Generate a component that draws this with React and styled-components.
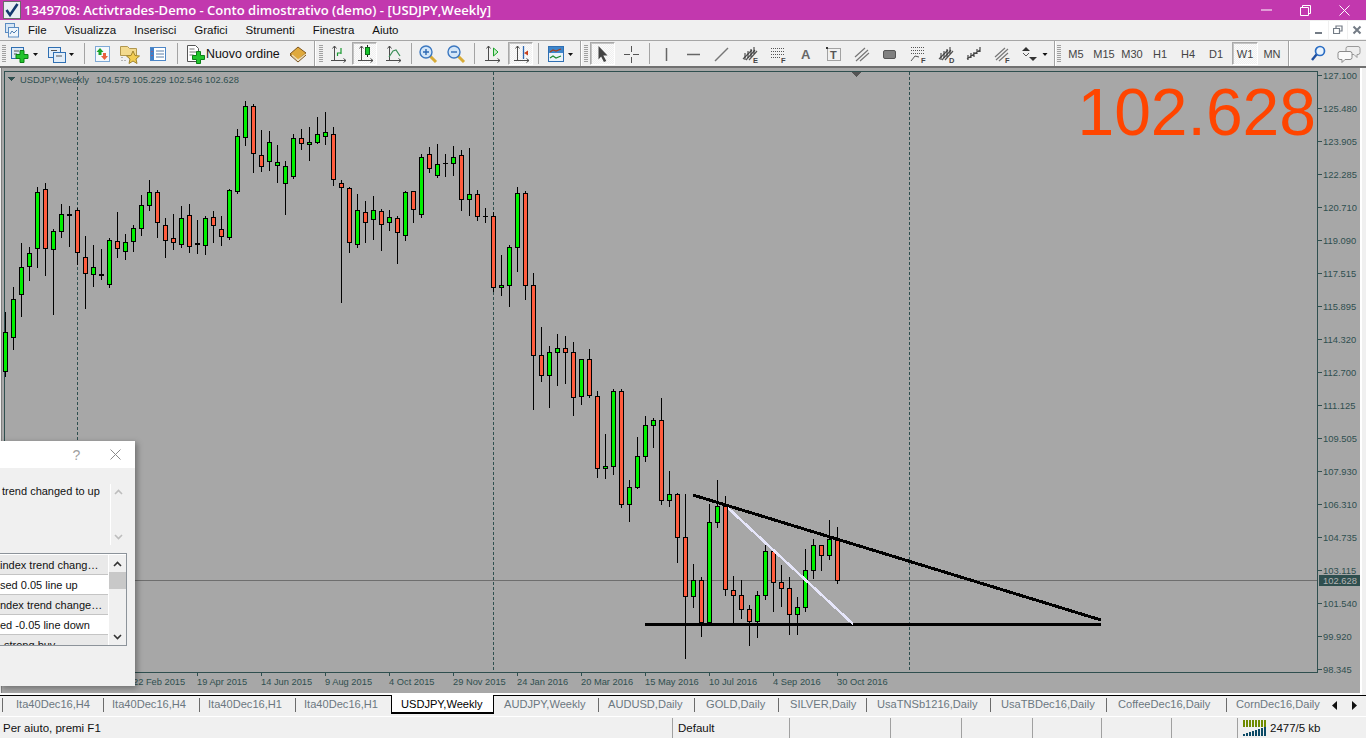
import React from 'react';
import styled, { createGlobalStyle } from 'styled-components';

const GlobalStyle = createGlobalStyle`
  html, body { margin: 0; padding: 0; background: #f0f0f0; overflow: hidden; }
  * { box-sizing: border-box; }
`;

const UI_FONT = '"Liberation Sans", Arial, sans-serif';
const AXIS = '#2f4f4f';

const Page = styled.div`
  width: 1366px;
  height: 738px;
  display: flex;
  flex-direction: column;
  background: #f0f0f0;
  font-family: ${UI_FONT};
  overflow: hidden;
`;

const TitleBar = styled.div`
  height: 20px;
  display: flex;
  align-items: center;
  background: #c238ae;
  color: #fff;
  padding-right: 2px;
`;
const AppIcon = styled.svg`
  margin-left: 3px;
  margin-right: 3px;
  flex: none;
`;
const TitleText = styled.div`
  flex: 1;
  font-family: "Open Sans", sans-serif;
  font-weight: 600;
  font-size: 13.05px;
  white-space: nowrap;
`;
const WinBtn = styled.div`
  width: 39px;
  height: 20px;
  display: flex;
  align-items: center;
  justify-content: center;
`;

const MenuBar = styled.div`
  height: 20px;
  display: flex;
  align-items: center;
  font-size: 11.5px;
  color: #111;
  padding-left: 5px;
`;
const MenuIcon = styled.svg`
  margin-right: 9px;
  flex: none;
`;
const MenuItem = styled.span`
  margin-right: 18px;
`;
const MdiButtons = styled.div`
  margin-left: auto;
  display: flex;
  gap: 1px;
`;
const MdiBtn = styled.div`
  width: 18px;
  height: 18px;
  background: #fff;
  display: flex;
  align-items: center;
  justify-content: center;
`;

const Toolbar = styled.div`
  height: 28px;
  display: flex;
  align-items: center;
  border-top: 1px solid #a6a6a6;
  border-bottom: 2px solid #707070;
`;
const Tool = styled.div`
  width: ${p => p.$w || 28}px;
  height: 23px;
  flex: none;
  margin-left: ${p => p.$ml || 0}px;
  display: flex;
  align-items: center;
  justify-content: ${p => p.$start ? 'flex-start' : 'center'};
  font-size: 11px;
  color: #444;
  ${p => p.$on && `
    border: 1px solid;
    border-color: #a9a9a9 #fff #fff #a9a9a9;
    box-shadow: inset 1px 1px 0 #c4c4c4;
    background: repeating-conic-gradient(#f0f0f0 0 25%, #fbfbfb 0 50%) 0 0 / 2px 2px;
  `}
`;
const Sep = styled.div`
  width: ${p => p.$w}px;
  flex: none;
  display: flex;
  justify-content: center;
  &::before {
    content: '';
    width: 1px;
    height: ${p => (p.$group ? 25 : 21)}px;
    background: #a3a3a3;
    ${p => p.$group && 'box-shadow: 1px 0 0 #fff;'}
  }
`;
const Grip = styled.div`
  width: ${p => p.$w}px;
  flex: none;
  display: flex;
  justify-content: center;
  &::before {
    content: '';
    width: 4px;
    height: 17px;
    background: repeating-linear-gradient(#a0a0a0 0 1px, transparent 1px 2px);
  }
`;
const OrderLabel = styled.span`
  font-size: 12.4px;
  color: #111;
  white-space: nowrap;
`;

const ChartArea = styled.div`
  flex: 1;
  position: relative;
  display: flex;
`;
const ChartPane = styled.div`
  width: 1362px;
  border-right: 2px solid #fff;
  border-bottom: 2px solid #fff;
  background: #a7a7a7;
`;
const ChartSvg = styled.svg`
  display: block;
`;

const Dialog = styled.div`
  position: absolute;
  left: 0;
  top: 373px;
  width: 135px;
  height: 245px;
  background: #f0f0f0;
  box-shadow: 2px 2px 6px rgba(0, 0, 0, 0.35);
  font-size: 11px;
  color: #111;
`;
const DialogHead = styled.div`
  height: 27px;
  background: #fff;
  display: flex;
  justify-content: flex-end;
  align-items: center;
`;
const HeadBtn = styled.div`
  width: 39px;
  display: flex;
  justify-content: center;
  color: #a0a0a0;
  font-size: 14px;
`;
const MessageBox = styled.div`
  margin-top: 16px;
  width: 126px;
  height: 61px;
  display: flex;
`;
const MessageText = styled.div`
  flex: 1;
  padding-left: 2px;
  line-height: 14px;
  white-space: nowrap;
`;
const MessageScroll = styled.div`
  width: 16px;
  border-left: 1px solid #fff;
  display: flex;
  flex-direction: column;
  justify-content: space-between;
  align-items: center;
  padding: 5px 0;
`;
const AlertList = styled.div`
  margin-top: 8px;
  width: 127px;
  height: 93px;
  background: #fff;
  border: 1px solid #8c939a;
  border-left: none;
  display: flex;
  padding-top: 1px;
`;
const AlertRows = styled.div`
  width: 108px;
  overflow: hidden;
`;
const AlertRow = styled.div`
  height: 20px;
  line-height: 21px;
  background: ${p => (p.$alt ? '#e9e9e9' : '#fff')};
  border-bottom: 1px solid #c4c4c4;
  padding-left: ${p => p.$pad || 0}px;
  white-space: nowrap;
  overflow: hidden;
`;
const ListScroll = styled.div`
  flex: 1;
  margin-left: 1px;
  background: #f0f0f0;
  display: flex;
  flex-direction: column;
  align-items: center;
`;
const ScrollArrow = styled.div`
  height: 17px;
  display: flex;
  align-items: center;
`;
const ScrollThumb = styled.div`
  width: 100%;
  height: 17px;
  background: #c8c8c8;
  margin-bottom: auto;
`;

const TabBar = styled.div`
  height: 21px;
  display: flex;
  border-top: 1px solid #000;
  padding-left: 2px;
  background: #f0f0f0;
  position: relative;
  font-size: 11.1px;
  color: #6b7780;
`;
const Tab = styled.div`
  width: ${p => p.$w}px;
  flex: none;
  height: 18px;
  padding-left: ${p => p.$pad}px;
  line-height: 17px;
  white-space: nowrap;
  overflow: hidden;
  position: relative;
  &::before {
    content: '';
    position: absolute;
    left: 0;
    top: 2px;
    width: 1px;
    height: 14px;
    background: ${p => (p.$plain ? 'transparent' : '#6b6b6b')};
  }
  ${p => p.$active && `
    background: #fff;
    color: #000;
    margin-top: -1px;
    height: 19px;
    line-height: 19px;
    border-left: 1px solid #000;
    border-right: 1px solid #000;
    border-bottom: 2px solid #000;
  `}
`;
const TabArrows = styled.div`
  position: absolute;
  left: 1332px;
  top: 5px;
  width: 25px;
  display: flex;
  justify-content: space-between;
`;

const StatusBar = styled.div`
  height: 22px;
  display: flex;
  border-top: 1px solid #fff;
  align-items: center;
  font-size: 11.5px;
  color: #111;
`;
const StatusCell = styled.div`
  width: ${p => p.$w}px;
  flex: none;
  height: 20px;
  line-height: 20px;
  display: flex;
  align-items: center;
  padding-left: ${p => p.$pad || 0}px;
  ${p => p.$line && 'border-left: 1px solid #a0a0a0;'}
  white-space: nowrap;
`;
const NetLabel = styled.span`
  margin-left: 3px;
`;

const I = ({ w = 20, children }) => (
  <svg width={w} height="20" viewBox={`0 0 ${w} 20`} fill="none">{children}</svg>
);

const Drop = ({ x }) => <polygon points={`${x},9 ${x + 5},9 ${x + 2.5},12`} fill="#111" />;
const GreenPlus = ({ x, y }) => (
  <path d={`M${x + 4} ${y}h4v4h4v4h-4v4h-4v-4h-4v-4h4z`} fill="#22c42c" stroke="#0b8016" />
);
const Axes = () => (
  <path d="M6.5 2v15M3 16.5h15M6.5 2l-2 2.5M6.5 2l2 2.5M18 16.5l-2.5-2M18 16.5l-2.5 2" stroke="#4c4c4c" />
);
const Hatch = ({ letter }) => (
  <>
    <path d="M3 15l9-9M6 16l9-10M9 16l8-9" stroke="#555" strokeWidth="1.2" />
    <path d="M5 16V9M8 14V7M11 13V5M14 10V3" stroke="#333" />
    {letter && <text x="13" y="19" fontSize="7.5" fontWeight="700" fill="#444" fontFamily={UI_FONT}>{letter}</text>}
  </>
);

const candles = [
  [312, 332, 371, 376, 'g'], [287, 299, 337, 349, 'g'], [243, 267, 294, 316, 'g'], [247, 253, 266, 280, 'g'],
  [187, 192, 248, 267, 'g'], [183, 189, 248, 275, 'r'], [229, 231, 249, 314, 'g'], [204, 214, 231, 237, 'g'],
  [206, 214, 215, 246, 'd'], [208, 210, 252, 264, 'r'], [236, 257, 273, 308, 'r'], [245, 267, 274, 286, 'g'],
  [249, 274, 275, 279, 'd'], [238, 240, 284, 287, 'g'], [212, 241, 248, 257, 'r'], [234, 242, 251, 259, 'g'],
  [225, 228, 241, 251, 'g'], [195, 205, 228, 235, 'g'], [180, 192, 205, 210, 'g'], [190, 192, 222, 237, 'r'],
  [218, 225, 240, 257, 'r'], [214, 238, 242, 249, 'r'], [206, 218, 244, 247, 'g'], [204, 215, 246, 252, 'r'],
  [220, 243, 244, 253, 'd'], [216, 218, 245, 254, 'g'], [211, 217, 225, 242, 'r'], [216, 229, 236, 245, 'r'],
  [189, 190, 237, 239, 'g'], [129, 136, 191, 193, 'g'], [101, 106, 137, 145, 'g'], [104, 106, 153, 172, 'r'],
  [130, 155, 166, 171, 'r'], [131, 142, 161, 170, 'g'], [145, 162, 165, 182, 'g'], [161, 166, 183, 214, 'g'],
  [134, 138, 176, 178, 'g'], [129, 138, 143, 149, 'r'], [127, 142, 144, 160, 'g'], [117, 134, 142, 143, 'g'],
  [112, 132, 136, 144, 'g'], [127, 134, 179, 185, 'r'], [180, 183, 187, 302, 'r'], [187, 188, 242, 252, 'r'],
  [194, 210, 244, 247, 'g'], [201, 212, 222, 242, 'r'], [196, 210, 219, 239, 'g'], [209, 211, 224, 250, 'r'],
  [210, 217, 222, 230, 'g'], [216, 218, 232, 263, 'r'], [191, 192, 235, 240, 'g'], [191, 191, 209, 222, 'r'],
  [154, 157, 214, 217, 'g'], [147, 154, 168, 172, 'r'], [144, 164, 175, 177, 'g'], [154, 163, 163, 176, 't'],
  [146, 157, 163, 175, 'g'], [150, 155, 199, 210, 'r'], [148, 194, 199, 215, 'g'], [190, 194, 216, 220, 'r'],
  [208, 216, 216, 222, 't'], [212, 216, 287, 291, 'r'], [255, 285, 287, 295, 'g'], [245, 247, 285, 306, 'g'],
  [187, 193, 247, 271, 'g'], [191, 193, 285, 299, 'r'], [273, 285, 355, 409, 'r'], [327, 355, 375, 381, 'r'],
  [346, 352, 375, 407, 'g'], [334, 348, 352, 385, 'g'], [336, 348, 352, 383, 'r'], [342, 352, 397, 415, 'r'],
  [359, 359, 396, 404, 'g'], [349, 359, 395, 397, 'r'], [391, 396, 468, 477, 'r'], [434, 466, 468, 478, 'g'],
  [389, 391, 466, 474, 'g'], [389, 391, 504, 507, 'r'], [480, 487, 504, 521, 'g'], [437, 456, 487, 488, 'g'],
  [416, 425, 456, 461, 'g'], [418, 420, 425, 447, 'g'], [398, 420, 500, 504, 'r'], [471, 494, 500, 506, 'g'],
  [493, 494, 537, 562, 'r'], [494, 537, 596, 658, 'r'], [564, 580, 596, 607, 'g'], [577, 580, 622, 636, 'r'],
  [504, 522, 622, 622, 'g'], [480, 506, 522, 527, 'g'], [496, 506, 589, 595, 'r'], [576, 590, 595, 622, 'r'],
  [580, 595, 609, 618, 'r'], [605, 609, 621, 645, 'r'], [591, 595, 621, 637, 'g'], [545, 551, 595, 599, 'g'],
  [549, 551, 582, 611, 'r'], [565, 582, 588, 606, 'r'], [577, 588, 614, 634, 'r'], [597, 607, 614, 634, 'g'],
  [549, 570, 607, 611, 'g'], [539, 545, 570, 578, 'g'], [545, 545, 555, 570, 'r'], [520, 539, 555, 559, 'g'],
  [527, 539, 580, 583, 'r'],
];
const priceLabels = ['127.100', '125.480', '123.905', '122.285', '120.710', '119.090', '117.515', '115.895', '114.320', '112.700', '111.125', '109.505', '107.930', '106.310', '104.735', '103.115', '101.540', '99.920', '98.345'];
const dates = ['22 Feb 2015', '19 Apr 2015', '14 Jun 2015', '9 Aug 2015', '4 Oct 2015', '29 Nov 2015', '24 Jan 2016', '20 Mar 2016', '15 May 2016', '10 Jul 2016', '4 Sep 2016', '30 Oct 2016'];
const tabs = [
  ['Ita40Dec16,H4', 101, 14], ['Ita40Dec16,H4', 96, 9], ['Ita40Dec16,H1', 96, 9], ['Ita40Dec16,H1', 96, 9],
  ['USDJPY,Weekly', 103, 9, true], ['AUDJPY,Weekly', 104, 10], ['AUDUSD,Daily', 96, 10], ['GOLD,Daily', 84, 12], ['SILVER,Daily', 88, 12],
  ['UsaTNSb1216,Daily', 124, 11], ['UsaTBDec16,Daily', 116, 11], ['CoffeeDec16,Daily', 120, 12], ['CornDec16,Daily', 104, 10],
];
const periods = ['M5', 'M15', 'M30', 'H1', 'H4', 'D1'];

const Candle = ({ c, i }) => {
  const x = 5 + 8 * i;
  const [high, top, bot, low, kind] = c;
  const wick = <line x1={x + 0.5} x2={x + 0.5} y1={high} y2={low + 1} stroke="#000" />;
  if (kind === 't') {
    return <g>{wick}<line x1={x - 2} x2={x + 3} y1={top + 0.5} y2={top + 0.5} stroke="#000" /></g>;
  }
  return (
    <g>
      {wick}
      <rect
        x={x - 1.5}
        y={top + 0.5}
        width="4"
        height={bot - top}
        fill={kind === 'g' ? '#00f000' : kind === 'r' ? '#ff5c3e' : '#000'}
        stroke="#000"
      />
    </g>
  );
};

function Chart() {
  return (
    <ChartSvg width="1360" height="625" viewBox="0 68 1360 625" shapeRendering="crispEdges" fontFamily={UI_FONT}>
      <line x1="1.5" x2="1.5" y1="68" y2="693" stroke="#808080" />
      <rect x="0" y="68" width="1" height="625" fill="#f0f0f0" />
      {[77.5, 493.5, 909.5].map(x => (
        <line key={x} x1={x} x2={x} y1="72" y2="672" stroke={AXIS} strokeDasharray="3 2" />
      ))}
      <line x1="5" x2="1317" y1="580.5" y2="580.5" stroke="#6e6e6e" />
      <path d="M4.5 672V71.5H1317.5V672.5H4.5" stroke={AXIS} fill="none" />
      {candles.map((c, i) => <Candle key={i} c={c} i={i} />)}
      <line x1="645" x2="1101" y1="624" y2="624" stroke="#000" strokeWidth="3" />
      <line x1="693" x2="1101" y1="495" y2="620" stroke="#000" strokeWidth="3" />
      <line x1="728" x2="853" y1="508" y2="624" stroke="#e6e6fa" strokeWidth="2.5" />
      <polygon points="852,72 861,72 856.5,77" fill="#555" />
      <polygon points="8,77 15,77 11.5,81" fill={AXIS} />
      <g fill={AXIS} shapeRendering="auto">
        <text x="20" y="82.5" fontSize="9.4">USDJPY,Weekly</text>
        <text x="96" y="82.5" fontSize="9.35">104.579 105.229 102.546 102.628</text>
        {priceLabels.map((p, i) => (
          <g key={p}>
            <rect x="1318" y={75 + 33 * i} width="4" height="1" fill={AXIS} />
            <text x="1323" y={79 + 33 * i} fontSize="9.4">{p}</text>
          </g>
        ))}
        <rect x="1319" y="575" width="41" height="11" fill={AXIS} />
        <text x="1323" y="584" fontSize="9.4" fill="#b4b4b4">102.628</text>
        {dates.map((d, i) => (
          <g key={d}>
            <rect x={133 + 64 * i} y="672" width="1" height="4" fill={AXIS} />
            <text x={133 + 64 * i} y="685" fontSize="9.3">{d}</text>
          </g>
        ))}
        <text x="1316" y="135" textAnchor="end" fontSize="66" fill="#ff4500">102.628</text>
      </g>
    </ChartSvg>
  );
}

const Chevron = ({ up, color = '#333', sw = 1.6 }) => (
  <svg width="9" height="6" viewBox="0 0 9 6" fill="none">
    <path d={up ? 'M1 5l3.5-3.5L8 5' : 'M1 1l3.5 3.5L8 1'} stroke={color} strokeWidth={sw} />
  </svg>
);

export default function App() {
  return (
    <Page>
      <GlobalStyle />
      <TitleBar>
        <AppIcon width="18" height="18" viewBox="0 0 18 18">
          <rect x="0.5" y="0.5" width="17" height="17" fill="#e9eef3" stroke="#6a6a6a" />
          <path d="M3.5 9l3.5 5L14.5 3" fill="none" stroke="#14386e" strokeWidth="2.6" />
        </AppIcon>
        <TitleText>1349708: Activtrades-Demo - Conto dimostrativo (demo) - [USDJPY,Weekly]</TitleText>
        <WinBtn>
          <svg width="11" height="2"><rect width="11" height="1" y="0.5" fill="#fff" /></svg>
        </WinBtn>
        <WinBtn>
          <svg width="11" height="11" fill="none" stroke="#fff"><path d="M0.5 2.5h8v8h-8zM2.5 2.5v-2h8v8h-2" /></svg>
        </WinBtn>
        <WinBtn>
          <svg width="11" height="11" stroke="#fff"><path d="M0.5 0.5l10 10M10.5 0.5l-10 10" /></svg>
        </WinBtn>
      </TitleBar>

      <MenuBar>
        <MenuIcon width="14" height="15" viewBox="0 0 14 15" fill="none">
          <rect x="0.5" y="0.5" width="9" height="9" fill="#d7e6f5" stroke="#5b8cc2" />
          <rect x="3.5" y="4.5" width="10" height="9.5" fill="#eef5fb" stroke="#5b8cc2" />
          <path d="M5 11l2-3 2 2 3-3" stroke="#4c7cb0" />
        </MenuIcon>
        {['File', 'Visualizza', 'Inserisci', 'Grafici', 'Strumenti', 'Finestra', 'Aiuto'].map(m => (
          <MenuItem key={m}>{m}</MenuItem>
        ))}
        <MdiButtons>
          <MdiBtn><svg width="10" height="10"><rect x="1" y="7" width="7" height="2" fill="#737b85" /></svg></MdiBtn>
          <MdiBtn><svg width="10" height="10" fill="none" stroke="#737b85" strokeWidth="1.2"><path d="M0.5 3.5h6v5h-6zM3 3V1h6v5H7" /></svg></MdiBtn>
          <MdiBtn><svg width="10" height="10" stroke="#737b85" strokeWidth="2"><path d="M1.5 1.5l7 7M8.5 1.5l-7 7" /></svg></MdiBtn>
        </MdiButtons>
      </MenuBar>

      <Toolbar>
        <Grip $w={8} />
        <Tool $w={32}>
          <I w={32}>
            <rect x="3.5" y="3.5" width="12" height="11" fill="#dbe9f6" stroke="#2f6fb2" />
            <path d="M6 7h5M6 10h3" stroke="#555" />
            <GreenPlus x={8} y={6.5} />
            <Drop x={25} />
          </I>
        </Tool>
        <Tool $w={38}>
          <I w={38}>
            <rect x="8.5" y="3.5" width="12" height="10" fill="#e2edf8" stroke="#2f6fb2" />
            <rect x="13.5" y="8.5" width="12" height="10" fill="#e2edf8" stroke="#2f6fb2" />
            <path d="M11 6.5h6M16 12h6" stroke="#555" />
            <Drop x={29} />
          </I>
        </Tool>
        <Sep $w={12} />
        <Tool $w={24}>
          <I>
            <rect x="3.5" y="2.5" width="14" height="15" fill="#f4f8fc" stroke="#7ea9d6" />
            <polygon points="8,4 11.5,8 9.5,8 9.5,11 6.5,11 6.5,8 4.5,8" fill="#1aa32a" />
            <polygon points="12.5,16 16,12 14,12 14,9 11,9 11,12 9,12" fill="#e8603c" />
          </I>
        </Tool>
        <Tool $w={30}>
          <I w={24}>
            <path d="M3.5 2.5h7l2 2h7v7h-16z" fill="#f3da8e" stroke="#b1974f" />
            <polygon points="16,7 18,11.5 22.5,12 19,15 20,19.5 16,17 12,19.5 13,15 9.5,12 14,11.5" fill="#f3cd52" stroke="#a1842e" />
            <path d="M5 13v1M5 16v1M8 16v1" stroke="#777" />
          </I>
        </Tool>
        <Tool $w={28}>
          <I>
            <rect x="2.5" y="3.5" width="15" height="13" fill="#fff" stroke="#4d86c6" />
            <rect x="3" y="4" width="3" height="12" fill="#3f7fc8" />
            <path d="M8 7h8M8 10h8M8 13h8" stroke="#5a7ea8" />
            <path d="M4 7v1M4 11v1" stroke="#d44" />
          </I>
        </Tool>
        <Sep $w={10} />
        <Tool $w={102} $start>
          <I w={24}>
            <path d="M5.5 1.5h8l3 3v13h-11z" fill="#fff" stroke="#555" />
            <path d="M7.5 5h5M7.5 8h7M7.5 11h4" stroke="#777" />
            <GreenPlus x={10.5} y={7.5} />
          </I>
          <OrderLabel>Nuovo ordine</OrderLabel>
        </Tool>
        <Tool $w={28}>
          <I>
            <polygon points="2,10 10,3 18,9 10,16" fill="#dfa93c" stroke="#7e551b" />
            <path d="M4 11l6 5 8-6" stroke="#f5e2b5" strokeWidth="1.2" />
            <path d="M2 11l8 7 8-7" stroke="#7e551b" />
          </I>
        </Tool>
        <Sep $w={4} $group />
        <Grip $w={10} />
        <Tool $w={23}>
          <I>
            <Axes />
            <path d="M9.5 12v-3h3.5M13 4v6" stroke="#1a9a30" strokeWidth="1.2" />
          </I>
        </Tool>
        <Tool $w={25} $ml={3} $on>
          <I>
            <Axes />
            <path d="M12.5 1v12" stroke="#222" />
            <rect x="10.5" y="3.5" width="4" height="7" fill="#17c42b" stroke="#0b6b18" />
          </I>
        </Tool>
        <Tool $w={31}>
          <I>
            <Axes />
            <path d="M6 13l4-6 3-1 4 6" stroke="#3c8f5a" strokeWidth="1.2" />
          </I>
        </Tool>
        <Sep $w={6} />
        <Tool $w={28}>
          <I>
            <path d="M12 12l6 6" stroke="#d8ab36" strokeWidth="3" />
            <circle cx="8" cy="8" r="6" fill="#d3e6f8" stroke="#3c78c0" strokeWidth="1.4" />
            <path d="M5 8h6M8 5v6" stroke="#2d68b2" strokeWidth="1.4" />
          </I>
        </Tool>
        <Tool $w={28}>
          <I>
            <path d="M12 12l6 6" stroke="#d8ab36" strokeWidth="3" />
            <circle cx="8" cy="8" r="6" fill="#d3e6f8" stroke="#3c78c0" strokeWidth="1.4" />
            <path d="M5 8h6" stroke="#2d68b2" strokeWidth="1.4" />
          </I>
        </Tool>
        <Sep $w={8} />
        <Tool $w={28}>
          <I>
            <Axes />
            <polygon points="11.5,4 16,8 11.5,12" fill="#c6f0c6" stroke="#1aa32a" />
          </I>
        </Tool>
        <Tool $w={25} $ml={2} $on>
          <I>
            <Axes />
            <path d="M12.5 2v13" stroke="#2d68b2" strokeWidth="1.3" />
            <polygon points="13,9 17,6.5 17,11.5" fill="#c8401c" />
          </I>
        </Tool>
        <Sep $w={10} />
        <Tool $w={35}>
          <I w={35}>
            <rect x="5.5" y="2.5" width="15" height="15" fill="#eaf2fa" stroke="#2f6fb2" />
            <rect x="6" y="3" width="14" height="6" fill="#3e86cc" />
            <path d="M7 8l3-2 3 1 5-2" stroke="#a8401c" strokeWidth="1.2" />
            <path d="M7 14l3-2 3 2 5-2" stroke="#1a8a30" strokeWidth="1.2" />
            <Drop x={25} />
          </I>
        </Tool>
        <Sep $w={5} $group />
        <Grip $w={6} />
        <Tool $w={25} $ml={1} $on>
          <I><path d="M5.5 2l9 9.5h-4.2l3 5.5-2.4 1-2.8-5.6-2.6 3z" fill="#444" /></I>
        </Tool>
        <Tool $w={31}>
          <I><path d="M10.5 2v6M10.5 13v6M3 10.5h6M12 10.5h6" stroke="#555" /></I>
        </Tool>
        <Sep $w={6} />
        <Tool><I><path d="M10.5 4v13" stroke="#666" strokeWidth="1.5" /></I></Tool>
        <Tool><I><path d="M3 10.5h13" stroke="#666" strokeWidth="1.5" /></I></Tool>
        <Tool><I><path d="M3 17L16 4" stroke="#777" strokeWidth="1.4" /></I></Tool>
        <Tool><I><Hatch letter="E" /></I></Tool>
        <Tool>
          <I>
            <path d="M3 4.5h13M3 7.5h13M3 10.5h13M3 13.5h10" stroke="#555" strokeDasharray="1 1" />
            <text x="13" y="19" fontSize="7.5" fontWeight="700" fill="#444" fontFamily={UI_FONT}>F</text>
          </I>
        </Tool>
        <Tool><I><text x="5" y="15" fontSize="13" fontWeight="700" fill="#666" fontFamily={UI_FONT}>A</text></I></Tool>
        <Tool>
          <I>
            <rect x="3.5" y="4.5" width="13" height="12" stroke="#555" strokeDasharray="1 1" />
            <text x="6" y="15" fontSize="11" fontWeight="700" fill="#555" fontFamily={UI_FONT}>T</text>
            <rect x="2" y="3" width="2" height="2" fill="#333" />
          </I>
        </Tool>
        <Tool><I><path d="M3 13l10-9M4 17L16 6M8 17l9-8" stroke="#777" strokeWidth="1.2" /></I></Tool>
        <Tool>
          <I><rect x="3.5" y="6.5" width="12" height="8" rx="1.5" fill="#808080" stroke="#555" /></I>
        </Tool>
        <Tool>
          <I>
            <path d="M3 3.5h14M3 6.5h14M3 9.5h14" stroke="#555" strokeDasharray="1 1" />
            <path d="M3 17l4-5 4 1" stroke="#555" />
            <text x="13" y="19" fontSize="7.5" fontWeight="700" fill="#444" fontFamily={UI_FONT}>F</text>
          </I>
        </Tool>
        <Tool><I><Hatch letter="D" /></I></Tool>
        <Tool><I><path d="M4 16V11M7 14V9M10 13V8M13 10V5M16 8V3M3 15L16 6" stroke="#444" strokeWidth="1.2" /></I></Tool>
        <Tool>
          <I>
            <path d="M3 13l10-9M4 16L16 5M7 17l9-8" stroke="#777" strokeWidth="1.2" />
            <text x="13" y="19" fontSize="7.5" fontWeight="700" fill="#444" fontFamily={UI_FONT}>F</text>
          </I>
        </Tool>
        <Tool $w={36}>
          <I w={36}>
            <polygon points="10,3 14,7 6,7" fill="#333" />
            <polygon points="14,16 18,12 10,12" fill="#333" transform="translate(3 1)" />
            <path d="M7 9l3 3 3-3" stroke="#555" />
            <Drop x={26.5} />
          </I>
        </Tool>
        <Sep $w={4} $group />
        <Grip $w={6} />
        {periods.map(p => <Tool key={p}>{p}</Tool>)}
        <Tool $w={26} $ml={2} $on>W1</Tool>
        <Tool>MN</Tool>
        <Sep $w={4} $group />
        <Tool $ml={14}>
          <I>
            <circle cx="12" cy="7" r="4.5" stroke="#2a6dc4" strokeWidth="1.7" fill="#e8f2fc" />
            <path d="M8.5 10.5L4 16" stroke="#1f4fa0" strokeWidth="2.4" />
          </I>
        </Tool>
        <Tool $w={34}>
          <I w={26}>
            <path d="M12 2.5h10a2 2 0 012 2v4a2 2 0 01-2 2h-1v3l-3-3h-6a2 2 0 01-2-2v-4a2 2 0 012-2z" fill="#eee" stroke="#9a9a9a" />
            <path d="M4 7.5h10a2 2 0 012 2v4a2 2 0 01-2 2H9l-3 3v-3H4a2 2 0 01-2-2v-4a2 2 0 012-2z" fill="#fafafa" stroke="#8a8a8a" />
          </I>
        </Tool>
      </Toolbar>

      <ChartArea>
        <ChartPane><Chart /></ChartPane>
        <Dialog>
          <DialogHead>
            <HeadBtn>?</HeadBtn>
            <HeadBtn>
              <svg width="11" height="11" stroke="#8a8a8a"><path d="M0.5 0.5l10 10M10.5 0.5l-10 10" /></svg>
            </HeadBtn>
          </DialogHead>
          <MessageBox>
            <MessageText>trend changed to up</MessageText>
            <MessageScroll>
              <Chevron up color="#bdbdbd" />
              <Chevron color="#bdbdbd" />
            </MessageScroll>
          </MessageBox>
          <AlertList>
            <AlertRows>
              <AlertRow $alt>index trend chang…</AlertRow>
              <AlertRow>sed 0.05 line up</AlertRow>
              <AlertRow $alt>ndex trend change…</AlertRow>
              <AlertRow>ed -0.05 line down</AlertRow>
              <AlertRow $alt $pad={4}>strong buy</AlertRow>
            </AlertRows>
            <ListScroll>
              <ScrollArrow><Chevron up /></ScrollArrow>
              <ScrollThumb />
              <ScrollArrow><Chevron /></ScrollArrow>
            </ListScroll>
          </AlertList>
        </Dialog>
      </ChartArea>

      <TabBar>
        {tabs.map(([label, w, pad, active], i) => (
          <Tab key={i} $w={w} $pad={pad} $active={active} $plain={active || i === 5}>{label}</Tab>
        ))}
        <TabArrows>
          <svg width="5" height="9"><polygon points="5,0 5,9 0,4.5" fill="#111" /></svg>
          <svg width="5" height="9"><polygon points="0,0 0,9 5,4.5" fill="#111" /></svg>
        </TabArrows>
      </TabBar>

      <StatusBar>
        <StatusCell $w={672} $pad={3}>Per aiuto, premi F1</StatusCell>
        <StatusCell $w={117} $pad={5} $line>Default</StatusCell>
        <StatusCell $w={101} $line />
        <StatusCell $w={71} $line />
        <StatusCell $w={71} $line />
        <StatusCell $w={69} $line />
        <StatusCell $w={70} $line />
        <StatusCell $w={66} $line />
        <StatusCell $w={129} $pad={5} $line>
          <svg width="24" height="16" viewBox="0 0 24 16">
            {[0, 3, 6, 9, 12, 15, 18, 21].map((x, i) => (
              <g key={x}>
                <rect x={x} y="0" width="2" height="7" fill="#6f8b00" />
                <rect x={x} y={14 - i} width="2" height={2 + i} fill="#0c4a66" />
              </g>
            ))}
          </svg>
          <NetLabel>2477/5 kb</NetLabel>
        </StatusCell>
      </StatusBar>
    </Page>
  );
}
